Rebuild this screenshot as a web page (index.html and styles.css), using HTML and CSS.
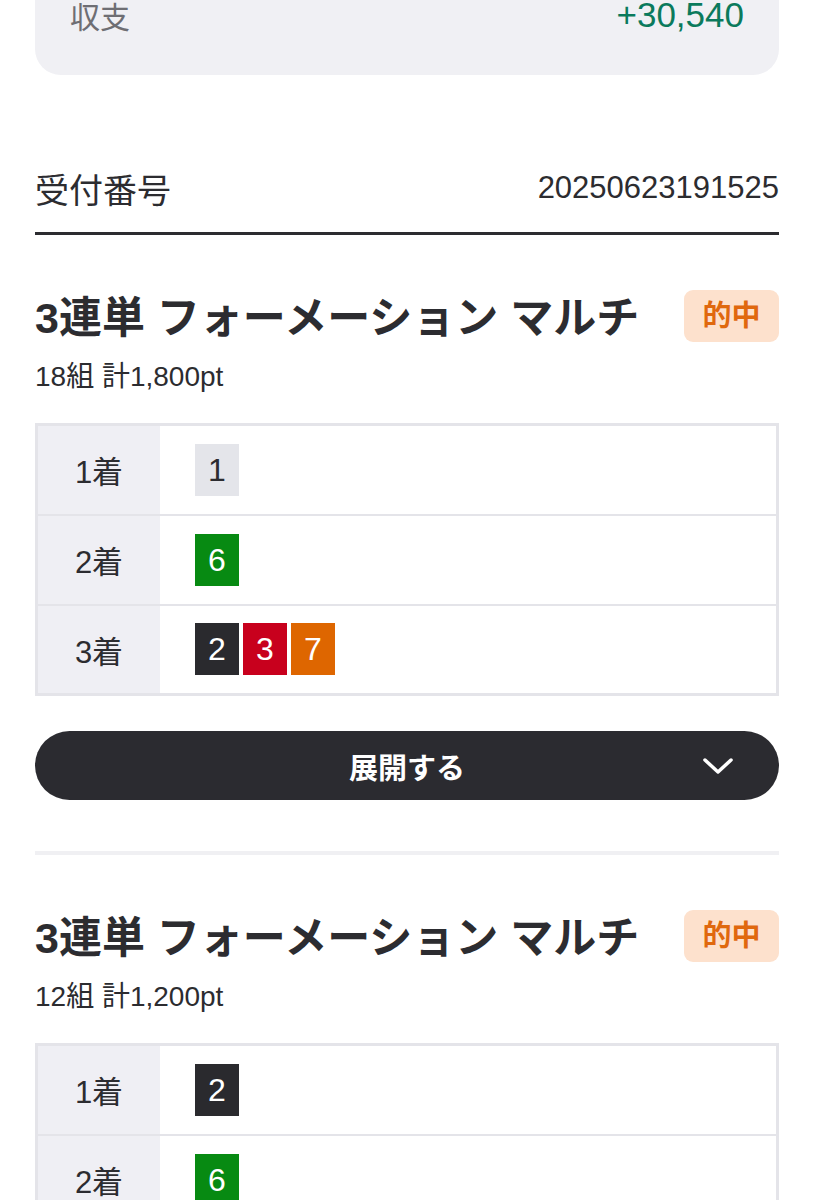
FILE: index.html
```html
<!DOCTYPE html>
<html lang="ja">
<head>
  <meta charset="UTF-8" />
  <meta name="viewport" content="width=device-width, initial-scale=1.0"/>
  <title>投票内容</title>
  <link rel="stylesheet" href="styles.css">
</head>
<body>
  <div class="page">
    <div class="summary">
      <div class="summary-row">
        <span class="summary-label">収支</span>
        <span class="summary-value">+30,540</span>
      </div>
    </div>

    <div class="receipt">
      <span class="receipt-label">受付番号</span>
      <span class="receipt-no">20250623191525</span>
    </div>

    <section class="bet">
      <div class="bet-head">
        <h2 class="bet-title">3連単 フォーメーション マルチ</h2>
        <span class="badge">的中</span>
      </div>
      <p class="bet-sub">18組 計1,800pt</p>

      <table class="picks">
        <tr>
          <th>1着</th>
          <td><span class="num n1">1</span></td>
        </tr>
        <tr>
          <th>2着</th>
          <td><span class="num n6">6</span></td>
        </tr>
        <tr>
          <th>3着</th>
          <td><span class="num n2">2</span><span class="num n3">3</span><span class="num n7">7</span></td>
        </tr>
      </table>

      <button class="expand" type="button">
        <span>展開する</span>
        <svg class="chevron" width="32" height="18" viewBox="0 0 32 18" fill="none">
          <path d="M3 3 L16 15 L29 3" stroke="#fff" stroke-width="3.5" stroke-linecap="round" stroke-linejoin="round"/>
        </svg>
      </button>
    </section>

    <hr class="divider">

    <section class="bet">
      <div class="bet-head">
        <h2 class="bet-title">3連単 フォーメーション マルチ</h2>
        <span class="badge">的中</span>
      </div>
      <p class="bet-sub">12組 計1,200pt</p>

      <table class="picks">
        <tr>
          <th>1着</th>
          <td><span class="num n2">2</span></td>
        </tr>
        <tr>
          <th>2着</th>
          <td><span class="num n6">6</span></td>
        </tr>
        <tr>
          <th>3着</th>
          <td><span class="num n1">1</span><span class="num n3">3</span><span class="num n7">7</span></td>
        </tr>
      </table>
    </section>
  </div>
</body>
</html>
```

FILE: styles.css
```css
body {
  margin: 0;
  font-family: "Liberation Sans", "Noto Sans CJK JP", sans-serif;
  background: #fff;
  color: #2c2c30;
  overflow: hidden;
}

.page {
  padding: 0 35px;
}

.summary {
  margin-top: -40px;
  padding: 35px 35px 40px;
  background: #f0f0f4;
  border-radius: 26px;
}

.summary-row {
  display: flex;
  justify-content: space-between;
  align-items: center;
  height: 40px;
}

.summary-label {
  font-size: 30px;
  color: #6e6e73;
}

.summary-value {
  font-size: 35px;
  color: #0b7a5c;
}

.receipt {
  display: flex;
  justify-content: space-between;
  align-items: center;
  margin-top: 91px;
  height: 44px;
  padding-bottom: 22px;
  border-bottom: 3px solid #2c2c30;
}

.receipt-label {
  font-size: 34px;
}

.receipt-no {
  font-size: 31px;
}

.bet-head {
  display: flex;
  justify-content: space-between;
  align-items: center;
  margin-top: 55px;
  height: 52px;
}

.bet-title {
  margin: 0;
  font-size: 43px;
  font-weight: bold;
  line-height: 52px;
  padding-top: 4px;
  white-space: nowrap;
}

.badge {
  width: 95px;
  height: 52px;
  line-height: 52px;
  text-align: center;
  background: #fde1cd;
  color: #e0680e;
  font-size: 29px;
  font-weight: bold;
  border-radius: 9px;
}

.bet-sub {
  margin: 18px 0 0;
  font-size: 28px;
  line-height: 34px;
}

.picks {
  width: 100%;
  margin-top: 29px;
  border-collapse: collapse;
  border: 3px solid #e4e4e9;
}

.picks tr {
  height: 90px;
  border-top: 2px solid #e4e4e9;
}

.picks th {
  width: 122px;
  background: #efeff4;
  font-size: 31px;
  font-weight: normal;
  text-align: center;
  padding: 0;
}

.picks td {
  padding: 0 0 0 35px;
  white-space: nowrap;
}

.num {
  display: inline-block;
  width: 44px;
  height: 52px;
  line-height: 52px;
  margin-right: 4px;
  text-align: center;
  font-size: 32px;
  color: #fff;
  vertical-align: middle;
}

.n1 { background: #e4e5ea; color: #2c2c30; }
.n2 { background: #2a2a2e; }
.n3 { background: #c8001d; }
.n6 { background: #078a12; }
.n7 { background: #de6600; }

.expand {
  position: relative;
  display: flex;
  justify-content: center;
  align-items: center;
  width: 100%;
  height: 69px;
  margin-top: 35px;
  border: none;
  border-radius: 35px;
  background: #2b2b30;
  color: #fff;
  font-family: inherit;
  font-size: 29px;
  font-weight: bold;
}

.chevron {
  position: absolute;
  right: 45px;
  top: 26px;
}

.divider {
  margin: 51px 0 0;
  border: none;
  height: 4px;
  background: #f0f0f3;
}
```
